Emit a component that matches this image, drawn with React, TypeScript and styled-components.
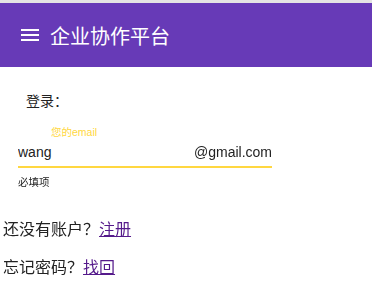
import React from 'react';
import styled, { createGlobalStyle } from 'styled-components';

const GlobalStyle = createGlobalStyle`
    body {
        margin: 0;
        background: #fff;
        font-family: 'Liberation Sans', 'Noto Sans CJK SC', sans-serif;
        color: #222;
    }
`;

const Page = styled.div`
    border-top: 3px solid #e4e4e4;
`;

const Toolbar = styled.header`
    height: 64px;
    background: #673ab7;
    display: flex;
    align-items: center;
    padding: 0 18px;
    color: #fff;
    box-sizing: border-box;
`;

const MenuButton = styled.span`
    width: 24px;
    height: 24px;
    display: flex;
    margin-right: 8px;
`;

const Title = styled.h1`
    margin: 0;
    font-size: 20px;
    font-weight: 400;
    font-family: 'Noto Sans CJK SC', sans-serif;
`;

const Form = styled.form`
    padding: 24px 0 0 18px;
`;

const Heading = styled.div`
    font-size: 14px;
    line-height: 20px;
    margin-left: 8px;
`;

const Field = styled.div`
    width: 254px;
    margin-top: 14px;
`;

const FloatLabel = styled.label`
    display: block;
    color: #ffd740;
    font-size: 10.5px;
    line-height: 14px;
    padding-left: 33px;
`;

const InputRow = styled.div`
    display: flex;
    align-items: baseline;
    border-bottom: 2px solid #ffd740;
    padding: 5px 0 5px;
    font-size: 14px;
    line-height: 17px;
`;

const Input = styled.input`
    flex: 1;
    min-width: 0;
    border: 0;
    outline: none;
    padding: 0;
    font: inherit;
    color: #222;
    background: transparent;
    caret-color: #222;
`;

const Suffix = styled.span`
    color: #222;
`;

const Hint = styled.div`
    font-size: 10.5px;
    line-height: 14px;
    margin-top: 7px;
`;

const Links = styled.div`
    padding: 30px 3px 0;
`;

const Line = styled.p`
    margin: 0 0 17px;
    font-size: 16px;
    line-height: 21px;
`;

const Anchor = styled.a`
    color: #551a8b;
`;

const App = (): JSX.Element => {
    return (
        <>
            <GlobalStyle />
            <Page>
                <Toolbar>
                    <MenuButton>
                        <svg width="24" height="24" viewBox="0 0 24 24" fill="#fff">
                            <path d="M3 18h18v-2H3v2zm0-5h18v-2H3v2zm0-7v2h18V6H3z" />
                        </svg>
                    </MenuButton>
                    <Title>企业协作平台</Title>
                </Toolbar>
                <Form onSubmit={(e) => e.preventDefault()}>
                    <Heading>登录：</Heading>
                    <Field>
                        <FloatLabel>您的email</FloatLabel>
                        <InputRow>
                            <Input defaultValue="wang" autoFocus />
                            <Suffix>@gmail.com</Suffix>
                        </InputRow>
                        <Hint>必填项</Hint>
                    </Field>
                </Form>
                <Links>
                    <Line>
                        还没有账户？<Anchor href="#">注册</Anchor>
                    </Line>
                    <Line>
                        忘记密码？<Anchor href="#">找回</Anchor>
                    </Line>
                </Links>
            </Page>
        </>
    );
};

export default App;
